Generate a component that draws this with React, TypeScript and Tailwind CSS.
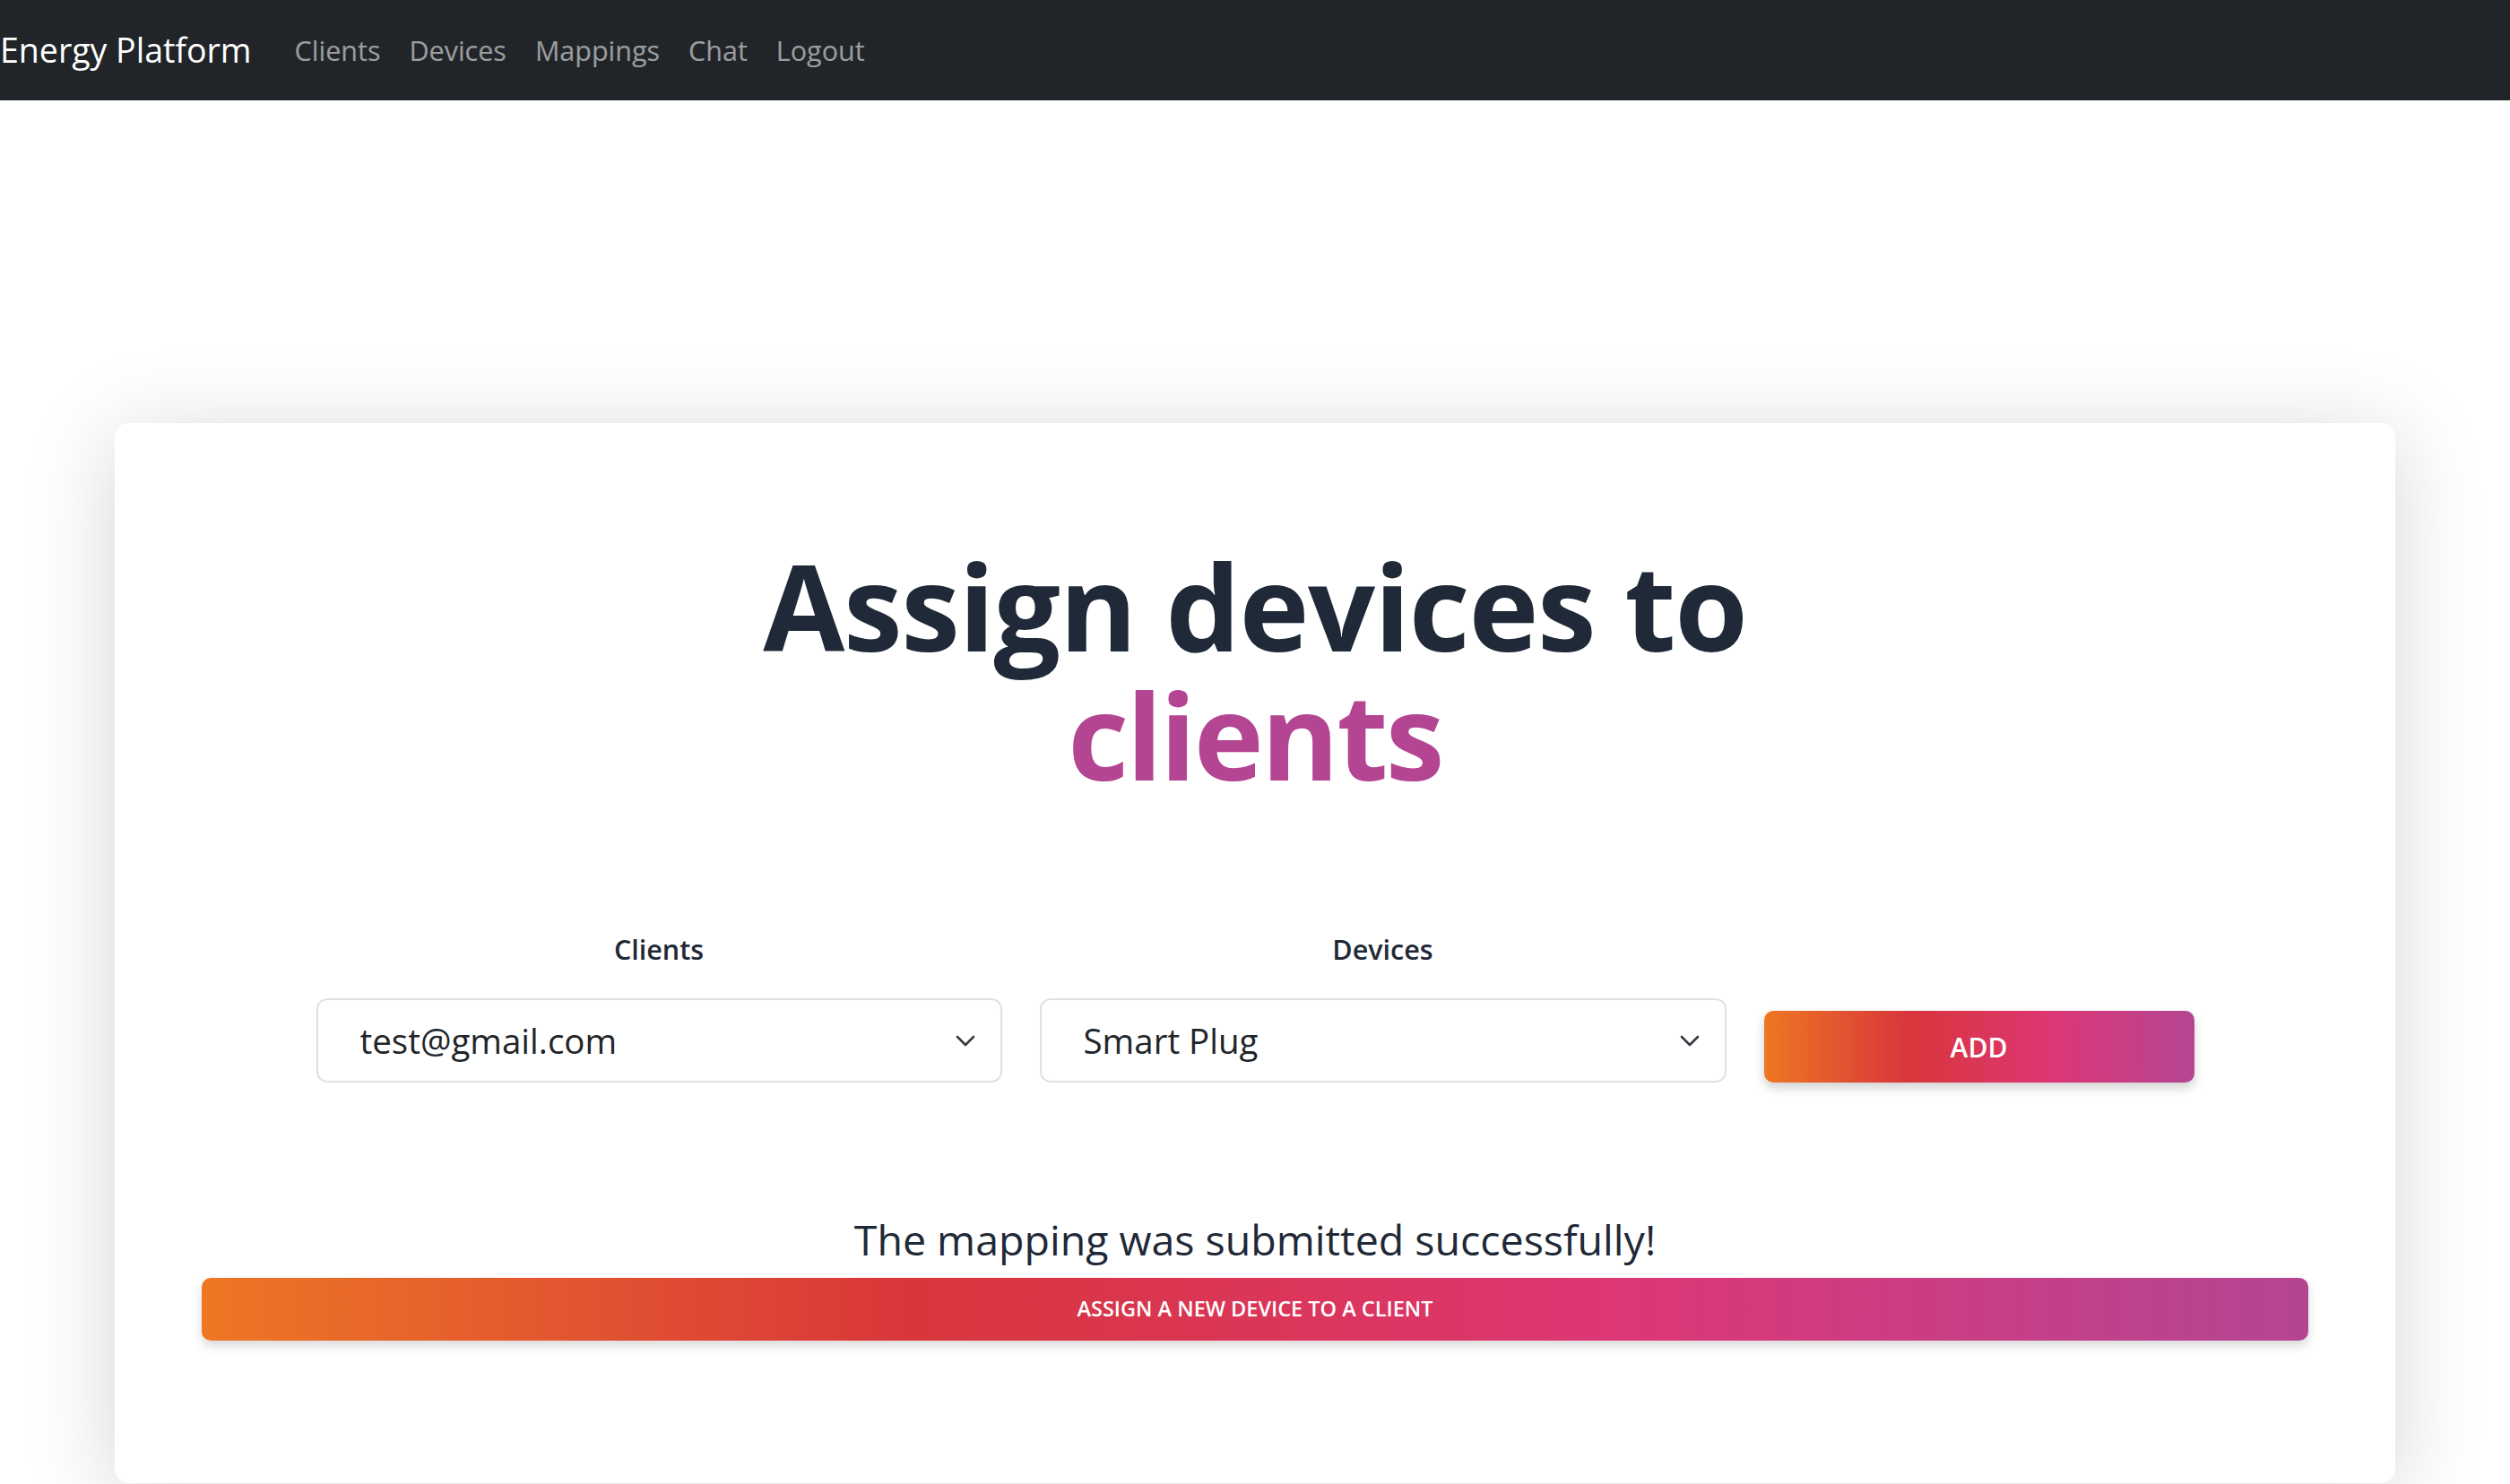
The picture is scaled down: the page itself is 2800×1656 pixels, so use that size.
import React from "react";

const Chevron = () => (
  <svg width="22" height="13" viewBox="0 0 22 13" fill="none" className="shrink-0">
    <path d="M2 2l9 9 9-9" stroke="#343a40" strokeWidth="2.6" strokeLinecap="round" strokeLinejoin="round" />
  </svg>
);

function Select({ value, width }: { value: string; width: string }) {
  return (
    <div
      className={`${width} h-[94px] border-2 border-[#dee2e6] rounded-[12px] bg-white flex items-center justify-between pl-[47px] pr-[28px]`}
    >
      <span className="text-[38.5px] text-[#212529] leading-none">{value}</span>
      <Chevron />
    </div>
  );
}

export default function App() {
  const grad = "bg-[linear-gradient(to_right,#ee7724,#d8363a,#dd3675,#b44593)]";
  return (
    <div className="min-h-screen bg-white font-['Open_Sans','Noto_Sans',sans-serif] overflow-hidden">
      <nav className="h-[112px] bg-[#212529] flex items-center">
        <span className="text-white text-[37.5px] mr-[32px] leading-none">Energy Platform</span>
        <ul className="flex items-center">
          {["Clients", "Devices", "Mappings", "Chat", "Logout"].map((l) => (
            <li key={l} className="px-[16px] text-[30.5px] text-white/55 leading-none">
              {l}
            </li>
          ))}
        </ul>
      </nav>

      <div className="mx-[128px] mt-[360px] h-[1183px] rounded-[16px] bg-white shadow-[0_15px_100px_rgba(0,0,0,0.17)] flex flex-col items-center pt-[132px] px-[97px]">
        <h1 className="text-center font-bold text-[132px] leading-[144px] tracking-[-0.01em] text-[#1f2937]">
          Assign devices to
          <br />
          <span className="text-[#b44593] tracking-[-0.02em]">clients</span>
        </h1>

        <div className="mt-[147px] flex items-end gap-[42px]">
          <div className="flex flex-col">
            <label className="text-center text-[30.5px] font-semibold leading-[40px] text-[#1f2937] mb-[35px]">
              Clients
            </label>
            <Select value="test@gmail.com" width="w-[765px]" />
          </div>
          <div className="flex flex-col">
            <label className="text-center text-[30.5px] font-semibold leading-[40px] text-[#1f2937] mb-[35px]">
              Devices
            </label>
            <Select value="Smart Plug" width="w-[766px]" />
          </div>
          <button
            className={`w-[480px] h-[80px] rounded-[10px] ${grad} text-white text-[30px] font-semibold shadow-[0_6px_12px_rgba(0,0,0,0.18)]`}
          >
            ADD
          </button>
        </div>

        <p className="mt-[144px] text-[46.5px] leading-[63px] text-[#1f2937] text-center">
          The mapping was submitted successfully!
        </p>
        <button
          className={`mt-[11px] w-full h-[70px] rounded-[10px] ${grad} text-white text-[23.5px] font-semibold uppercase shadow-[0_6px_12px_rgba(0,0,0,0.15)]`}
        >
          Assign a new device to a client
        </button>
      </div>
    </div>
  );
}
